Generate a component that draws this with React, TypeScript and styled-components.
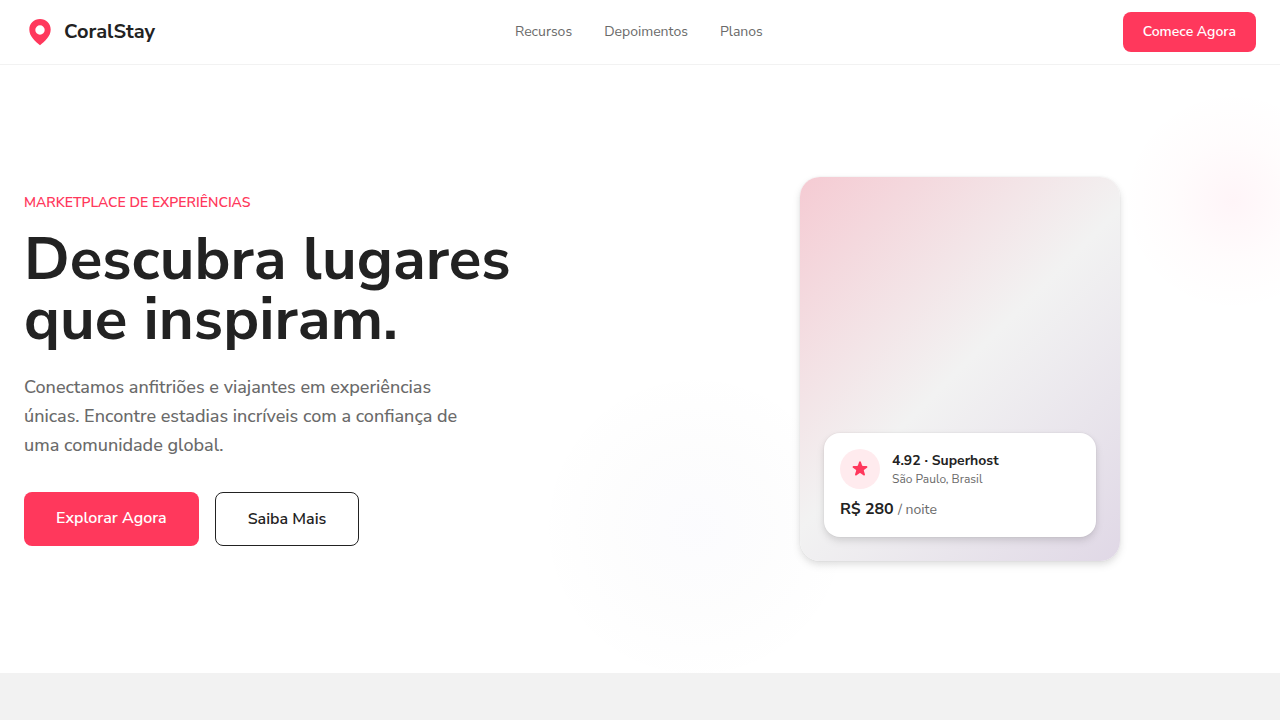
import React from 'react';
import styled, { createGlobalStyle } from 'styled-components';

const coral = '#ff385c';
const ink = '#222222';
const muted = '#6a6a6a';

const GlobalStyle = createGlobalStyle`
  *, *::before, *::after { box-sizing: border-box; }
  body {
    margin: 0;
    background: #ffffff;
    color: ${ink};
    font-family: 'Nunito Sans', Nunito, 'Noto Sans', sans-serif;
    font-size: 16px;
    line-height: 24px;
  }
  h1, p { margin: 0; }
  a { color: inherit; text-decoration: none; }
`;

const Header = styled.header`
  border-bottom: 1px solid #f2f2f2;
  background: #ffffff;
`;

const HeaderInner = styled.div`
  display: flex;
  align-items: center;
  justify-content: space-between;
  height: 64px;
  max-width: 1280px;
  margin: 0 auto;
  padding: 0 24px;
`;

const Brand = styled.a`
  display: flex;
  align-items: center;
  gap: 8px;
  font-size: 20px;
  line-height: 28px;
  font-weight: 700;
`;

const Nav = styled.nav`
  display: flex;
  gap: 32px;
  color: ${muted};
  font-size: 14px;
  line-height: 20px;
`;

const Button = styled.button`
  padding: 10px 20px;
  border: none;
  border-radius: 8px;
  background: ${coral};
  color: #ffffff;
  font-family: inherit;
  font-size: 14px;
  line-height: 20px;
  font-weight: 600;
  cursor: pointer;
`;

const LargeButton = styled(Button)`
  padding: 14px 32px 16px;
  font-size: 16px;
  line-height: 24px;
`;

const OutlineButton = styled(LargeButton)`
  padding: 14px 32px;
  border: 1px solid ${ink};
  background: #ffffff;
  color: ${ink};
`;

const Hero = styled.section`
  position: relative;
  overflow: hidden;
`;

const Glow = styled.div<{ $tone: 'coral' | 'lavender' }>`
  position: absolute;
  border-radius: 50%;
  pointer-events: none;
  ${(p) =>
    p.$tone === 'coral'
      ? `
    top: 16px;
    right: -73px;
    width: 240px;
    height: 240px;
    background: radial-gradient(circle closest-side, rgba(255, 56, 120, 0.05), rgba(255, 56, 92, 0.014) 50%, transparent 92%);
  `
      : `
    bottom: -14px;
    left: calc(50% - 104px);
    width: 320px;
    height: 320px;
    background: radial-gradient(circle closest-side, rgba(70, 70, 200, 0.018), rgba(70, 70, 90, 0.012) 50%, transparent);
  `}
`;

const HeroGrid = styled.div`
  position: relative;
  display: grid;
  grid-template-columns: 1fr 1fr;
  align-items: center;
  gap: 48px;
  max-width: 1280px;
  margin: 0 auto;
  padding: 112px 24px;
`;

const Eyebrow = styled.p`
  margin-bottom: 16px;
  color: ${coral};
  font-size: 14px;
  line-height: 20px;
  font-weight: 600;
  text-transform: uppercase;
`;

const Title = styled.h1`
  margin-bottom: 24px;
  font-size: 60px;
  line-height: 60px;
  font-weight: 700;
`;

const Lead = styled.p`
  max-width: 448px;
  margin-bottom: 32px;
  color: ${muted};
  font-size: 18px;
  line-height: 29px;
  font-weight: 500;
`;

const Actions = styled.div`
  display: flex;
  gap: 16px;
`;

const Photo = styled.div`
  display: flex;
  align-items: flex-end;
  justify-self: center;
  width: 100%;
  max-width: 320px;
  height: 384px;
  padding: 24px;
  border-radius: 20px;
  background: linear-gradient(135deg, #f5cbd3 0%, #f2f2f2 50%, #e0d8e6 100%);
  box-shadow: 0 0 0 1px rgba(0, 0, 0, 0.02), 0 2px 6px rgba(0, 0, 0, 0.04), 0 4px 8px rgba(0, 0, 0, 0.1);
`;

const Listing = styled.article`
  flex: 1;
  padding: 16px;
  border-radius: 16px;
  background: #ffffff;
  box-shadow: 0 0 0 1px rgba(0, 0, 0, 0.02), 0 2px 6px rgba(0, 0, 0, 0.04), 0 4px 8px rgba(0, 0, 0, 0.1);
`;

const Host = styled.div`
  display: flex;
  align-items: center;
  gap: 12px;
  margin-bottom: 8px;
`;

const Badge = styled.span`
  display: flex;
  align-items: center;
  justify-content: center;
  width: 40px;
  height: 40px;
  border-radius: 50%;
  background: #ffebee;
`;

const Rating = styled.p`
  font-size: 14px;
  line-height: 20px;
  font-weight: 700;
`;

const Place = styled.p`
  color: ${muted};
  font-size: 12px;
  line-height: 16px;
`;

const Price = styled.p`
  font-weight: 700;
`;

const Night = styled.span`
  color: ${muted};
  font-size: 14px;
  line-height: 20px;
  font-weight: 400;
`;

const Features = styled.section`
  min-height: 96px;
  background: #f2f2f2;
`;

export default function App() {
  return (
    <>
      <GlobalStyle />
      <Header>
        <HeaderInner>
          <Brand href="#">
            <svg width="32" height="32" viewBox="0 0 32 32" aria-hidden="true">
              <path
                fill={coral}
                fillRule="evenodd"
                d="M16 3C10 3 5.300 7.500 5.300 13.400C5.300 20.500 11.500 25.300 16 29.300C20.500 25.300 26.700 20.500 26.700 13.400C26.700 7.500 22 3 16 3ZM16 9.300A4.700 4.700 0 1 1 16 18.700A4.700 4.700 0 1 1 16 9.300Z"
              />
            </svg>
            CoralStay
          </Brand>
          <Nav>
            <a href="#recursos">Recursos</a>
            <a href="#depoimentos">Depoimentos</a>
            <a href="#planos">Planos</a>
          </Nav>
          <Button type="button">Comece Agora</Button>
        </HeaderInner>
      </Header>
      <main>
        <Hero>
          <Glow $tone="coral" />
          <Glow $tone="lavender" />
          <HeroGrid>
            <div>
              <Eyebrow>Marketplace de experiências</Eyebrow>
              <Title>Descubra lugares que inspiram.</Title>
              <Lead>
                Conectamos anfitriões e viajantes em experiências únicas. Encontre estadias incríveis com a confiança
                de uma comunidade global.
              </Lead>
              <Actions>
                <LargeButton type="button">Explorar Agora</LargeButton>
                <OutlineButton type="button">Saiba Mais</OutlineButton>
              </Actions>
            </div>
            <Photo>
              <Listing>
                <Host>
                  <Badge>
                    <svg width="20" height="20" viewBox="0 0 20 20" aria-hidden="true">
                      <path
                        fill={coral}
                        d="M9.049 2.927c.3-.921 1.603-.921 1.902 0l1.070 3.292a1 1 0 00.950.690h3.462c.969 0 1.371 1.240.588 1.810l-2.800 2.034a1 1 0 00-.364 1.118l1.070 3.292c.3.921-.755 1.688-1.540 1.118l-2.800-2.034a1 1 0 00-1.175 0l-2.800 2.034c-.784.570-1.838-.197-1.539-1.118l1.070-3.292a1 1 0 00-.364-1.118L2.980 8.720c-.783-.570-.380-1.810.588-1.810h3.461a1 1 0 00.951-.690l1.070-3.292z"
                      />
                    </svg>
                  </Badge>
                  <div>
                    <Rating>4.92 · Superhost</Rating>
                    <Place>São Paulo, Brasil</Place>
                  </div>
                </Host>
                <Price>
                  R$ 280 <Night>/ noite</Night>
                </Price>
              </Listing>
            </Photo>
          </HeroGrid>
        </Hero>
        <Features />
      </main>
    </>
  );
}
